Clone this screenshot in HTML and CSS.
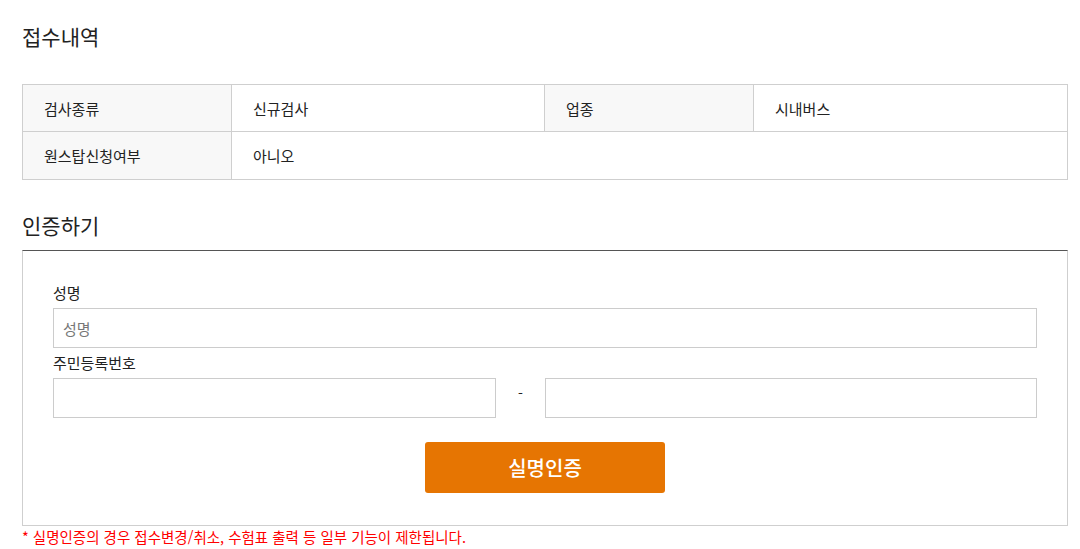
FILE: index.html
```html
<!DOCTYPE html>
<html lang="ko">
<head>
<meta charset="utf-8">
<link rel="stylesheet" href="styles.css">
</head>
<body>
<div class="page">
  <h2 class="title first">접수내역</h2>
  <table class="info">
    <tr>
      <th>검사종류</th><td>신규검사</td><th>업종</th><td>시내버스</td>
    </tr>
    <tr>
      <th>원스탑신청여부</th><td colspan="3">아니오</td>
    </tr>
  </table>
  <h2 class="title second">인증하기</h2>
  <div class="auth">
    <label class="lbl">성명</label>
    <input class="inp" type="text" placeholder="성명">
    <label class="lbl lbl2">주민등록번호</label>
    <div class="ssn">
      <input class="inp ssn1" type="text">
      <span class="dash">-</span>
      <input class="inp ssn2" type="password">
    </div>
    <div class="btnrow"><button class="btn">실명인증</button></div>
  </div>
  <p class="note">* 실명인증의 경우 접수변경/취소, 수험표 출력 등 일부 기능이 제한됩니다.</p>
</div>
</body>
</html>
```
FILE: styles.css
```css
* { box-sizing: border-box; }
html, body { margin: 0; padding: 0; background: #fff; }
body { font-family: "Noto Sans CJK KR", "Noto Sans", sans-serif; color: #222; }
.page { width: 1046px; margin-left: 22px; }
.title { font-size: 21px; font-weight: 400; margin: 0; line-height: 30px; color: #222; }
.title.first { padding-top: 21px; margin-bottom: 33px; }
.title.second { margin-top: 30px; margin-bottom: 10px; }
.info { width: 100%; border-collapse: collapse; table-layout: fixed; font-size: 15px; }
.info th, .info td { border: 1px solid #cfcfcf; height: 47px; padding: 0 0 0 21px; text-align: left; font-weight: 400; color: #222; }
.info th { background: #f8f8f8; width: 209px; }
.info tr:first-child td:nth-child(2) { width: 313px; }
.info tr:last-child th, .info tr:last-child td { height: 48px; }
.auth { border: 1px solid #cfcfcf; border-top: 1px solid #555; padding: 32px 30px 32px; }
.lbl { display: block; font-size: 15px; line-height: 20px; height: 25px; color: #222; }
.lbl2 { margin-top: 5px; height: 25px; }
.inp { display: block; width: 100%; height: 40px; border: 1px solid #ccc; padding: 0 9px; font-family: inherit; font-size: 15px; color: #222; outline: none; background: #fff; }
.inp::placeholder { color: #777; }
.ssn { display: flex; align-items: center; }
.ssn1 { width: 45%; }
.dash { width: 5%; text-align: center; font-size: 14px; color: #222; margin-top: -10px; }
.ssn2 { width: 50%; }
.btnrow { display: flex; justify-content: center; margin-top: 24px; }
.btn { width: 240px; height: 51px; background: #e67502; color: #fff; border: 0; border-radius: 3px; font-family: inherit; font-size: 20px; font-weight: 500; }
.note { margin: 1px 0 0; font-size: 14.5px; line-height: 20px; color: #f00; }
```
